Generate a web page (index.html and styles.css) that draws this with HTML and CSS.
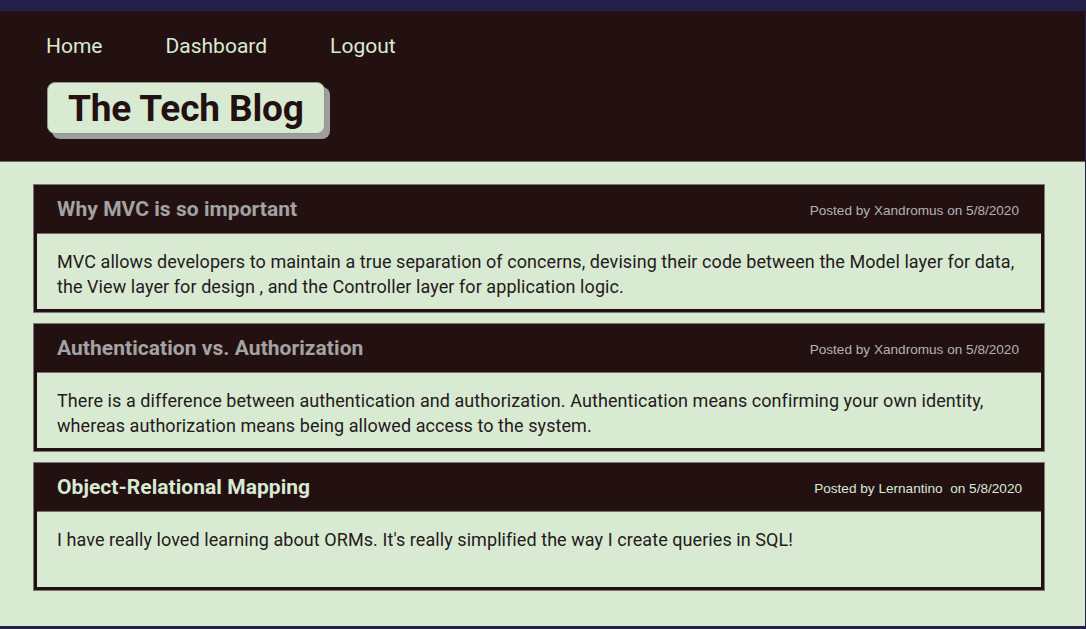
FILE: index.html
```html
<!DOCTYPE html>
<html lang="en">
<head>
<meta charset="utf-8">
<title>The Tech Blog</title>
<link rel="stylesheet" href="styles.css">
</head>
<body>
<div class="page">
  <header class="site-header">
    <nav class="nav">
      <a href="#" class="nav-link">Home</a>
      <a href="#" class="nav-link">Dashboard</a>
      <a href="#" class="nav-link">Logout</a>
    </nav>
    <div class="brand"><h1 class="brand-title">The Tech Blog</h1></div>
  </header>
  <main class="posts">
    <article class="post">
      <div class="post-head">
        <h2 class="post-title muted">Why MVC is so important</h2>
        <span class="post-meta muted">Posted by Xandromus on 5/8/2020</span>
      </div>
      <div class="post-body">
        <p>MVC allows developers to maintain a true separation of concerns, devising their code between the Model layer for data, the View layer for design , and the Controller layer for application logic.</p>
      </div>
    </article>
    <article class="post">
      <div class="post-head">
        <h2 class="post-title muted">Authentication vs. Authorization</h2>
        <span class="post-meta muted">Posted by Xandromus on 5/8/2020</span>
      </div>
      <div class="post-body">
        <p>There is a difference between authentication and authorization. Authentication means confirming your own identity, whereas authorization means being allowed access to the system.</p>
      </div>
    </article>
    <article class="post">
      <div class="post-head">
        <h2 class="post-title">Object-Relational Mapping</h2>
        <span class="post-meta light last">Posted by Lernantino &nbsp;on 5/8/2020</span>
      </div>
      <div class="post-body">
        <p>I have really loved learning about ORMs. It's really simplified the way I create queries in SQL!</p>
      </div>
    </article>
  </main>
</div>
</body>
</html>
```

FILE: styles.css
```css
html, body {
  margin: 0;
  padding: 0;
}
body {
  background: #25204a;
  font-family: Roboto, "Liberation Sans", Arial, sans-serif;
  height: 629px;
  box-sizing: border-box;
  padding: 11px 1px 3px 0;
}
.page {
  background: #d9ead3;
  height: 615px;
  display: flex;
  flex-direction: column;
}
.site-header {
  background: #231112;
  height: 151px;
  border-bottom: 1px solid #6e6566;
  padding: 23px 0 0 46px;
  box-sizing: border-box;
}
.nav {
  display: flex;
  gap: 63px;
}
.nav-link {
  color: #d9ead3;
  text-decoration: none;
  font-size: 21px;
  line-height: 24px;
}
.brand {
  margin-top: 24px;
  margin-left: 1px;
  width: 278px;
  height: 52px;
  box-sizing: border-box;
  background: #d9ead3;
  border-radius: 8px;
  border: 1px solid #8f9a8b;
  box-shadow: 5px 5px 0 #9e9e9e;
  display: flex;
  align-items: center;
  padding-left: 20px;
}
.brand-title {
  margin: 0;
  font-size: 37px;
  font-weight: 700;
  color: #231112;
  line-height: 40px;
  margin-top: 2px;
  letter-spacing: -0.15px;
}
.posts {
  padding: 23px 41px 0 34px;
  display: flex;
  flex-direction: column;
  gap: 12px;
}
.post {
  border: 3px solid #231112;
  box-shadow: 0 0 0 1px #7c7777;
  background: #231112;
}
.post-head {
  height: 45px;
  display: flex;
  align-items: center;
  justify-content: space-between;
  padding: 0 22px 0 20px;
  border-bottom: 1px solid #77706f;
}
.post-title {
  margin: 0;
  font-size: 21px;
  font-weight: 700;
  color: #d9ead3;
  line-height: 24px;
  margin-top: -3px;
  letter-spacing: 0.05px;
}
.post-title.muted {
  color: #a3a3a3;
}
.post-meta {
  font-family: "Liberation Sans", Arial, sans-serif;
  font-size: 13.6px;
  color: #d9ead3;
  margin-top: -1px;
}
.post-meta.muted {
  color: #b3b3b3;
}
.post-meta.last {
  margin-right: -3px;
}
.post-body {
  background: #d9ead3;
  height: 75px;
  box-sizing: border-box;
  padding: 15px 20px 0 20px;
}
.post-body p {
  margin: 0;
  font-size: 18px;
  line-height: 25px;
  color: #231a1a;
  letter-spacing: 0.07px;
}
```
